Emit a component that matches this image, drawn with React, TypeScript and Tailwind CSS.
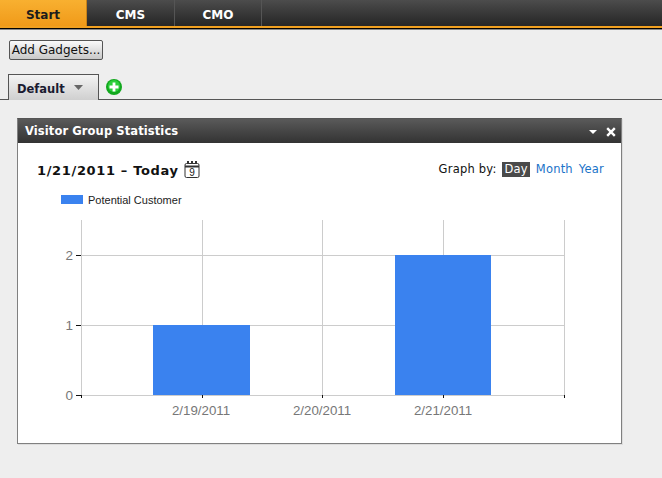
import React from "react";

const sans = "font-['DejaVu_Sans',sans-serif]";

function Tab({ label, active, w }: { label: string; active?: boolean; w: string }) {
  return (
    <div
      className={`${w} h-[26px] pt-[3px] flex items-center justify-center text-[12px] font-bold border-r ${
        active
          ? "bg-gradient-to-b from-[#f8b030] to-[#f09a18] text-[#1c1c1c] border-[#c88218]"
          : "bg-gradient-to-b from-[#4c4c4c] to-[#262626] text-white border-[#555555]"
      }`}
    >
      {label}
    </div>
  );
}

function Chart() {
  const ys = [255, 325];
  const xs = [81.5, 202.5, 322.5, 443.5, 564.5];
  const txt = "#777777";
  return (
    <svg width="662" height="240" viewBox="0 190 662 240" className="block -ml-[18px]" style={{ fontFamily: "'Liberation Sans', sans-serif" }}>
      <rect x="61" y="195" width="22" height="9" fill="#3a82ef" />
      <text x="88" y="204" fontSize="11" fill="#222222">Potential Customer</text>
      {xs.map((x) => (
        <line key={x} x1={x} x2={x} y1="220" y2="395" stroke="#cccccc" />
      ))}
      {ys.map((y) => (
        <line key={y} x1="81" x2="565" y1={y + 0.5} y2={y + 0.5} stroke="#cccccc" />
      ))}
      <rect x="153" y="325" width="97" height="70" fill="#3a82ef" />
      <rect x="395" y="255" width="96" height="140" fill="#3a82ef" />
      <line x1="81" x2="565" y1="395.5" y2="395.5" stroke="#cccccc" />
      {[255, 325, 395].map((y) => (
        <line key={y} x1="76" x2="81" y1={y + 0.5} y2={y + 0.5} stroke="#111111" />
      ))}
      {xs.map((x) => (
        <line key={x} x1={x} x2={x} y1="395" y2="398" stroke="#111111" />
      ))}
      {[["2", 260], ["1", 330], ["0", 400]].map(([l, y]) => (
        <text key={l as string} x="73" y={y as number} fontSize="13.5" fill={txt} textAnchor="end">{l}</text>
      ))}
      {[["2/19/2011", 201], ["2/20/2011", 322], ["2/21/2011", 443]].map(([l, x]) => (
        <text key={l as string} x={x as number} y="415" fontSize="13.3" fill={txt} textAnchor="middle">{l}</text>
      ))}
    </svg>
  );
}

export default function App() {
  return (
    <div className={`w-[662px] h-[478px] overflow-hidden bg-[#eeeeee] ${sans}`}>
      <div className="h-[30px] bg-black border-b border-[#888888]">
        <div className="flex h-[26px] bg-gradient-to-b from-[#4c4c4c] to-[#262626]">
          <Tab label="Start" active w="w-[87px]" />
          <Tab label="CMS" w="w-[88px]" />
          <Tab label="CMO" w="w-[87px]" />
        </div>
        <div className="h-[2px] bg-[#f0a020]" />
      </div>

      <div className="pl-[9px] pt-[10px]">
        <button className="block w-[94px] h-[20px] rounded-[2px] border border-[#555555] bg-gradient-to-b from-[#fafafa] to-[#c8c8c8] text-[12px] leading-[17px] text-[#111111] whitespace-nowrap">
          Add Gadgets...
        </button>
      </div>

      <div className="mt-[14px] h-[26px] border-b border-[#555555] pl-[8px] flex">
        <div className="w-[91px] h-[26px] border border-b-0 border-[#555555] bg-gradient-to-b from-[#f4f4f4] to-[#cfcfcf] flex items-center pl-[8px] pt-[5px] gap-[9px]">
          <span className="text-[11.5px] font-bold text-[#1a1a30]">Default</span>
          <svg width="9" height="5" viewBox="0 0 9 5" className="-mt-[5px]"><path d="M0 0h9L4.5 5z" fill="#666666" /></svg>
        </div>
        <svg width="16" height="16" viewBox="0 0 16 16" className="ml-[7px] mt-[5px]">
          <circle cx="8" cy="8" r="8" fill="#12a81e" />
          <circle cx="8" cy="7" r="6" fill="#2ccf3a" />
          <path d="M6.6 3.5h2.8v3.1h3.1v2.8H9.4v3.1H6.6V9.4H3.5V6.6h3.1z" fill="#ffffff" />
        </svg>
      </div>

      <div className="ml-[17px] mt-[18px] w-[605px] h-[326px] border border-[#808080] border-t-[#555555] bg-white shadow-[1px_1px_0_#dddddd]">
        <div className="h-[24px] pt-[2px] bg-gradient-to-b from-[#5a5a5a] to-[#333333] flex items-center pl-[7px] pr-[5px] text-white">
          <span className="text-[11.5px] font-bold tracking-[0.1px]">Visitor Group Statistics</span>
          <svg width="8" height="4" viewBox="0 0 8 4" className="ml-auto"><path d="M0 0h8L4 4z" fill="#ffffff" /></svg>
          <svg width="10" height="10" viewBox="0 0 10 10" className="ml-[9px]"><path d="M1.2 1.2l7.6 7.6M8.8 1.2L1.2 8.8" stroke="#ffffff" strokeWidth="2.4" /></svg>
        </div>
        <div className="flex items-start pl-[19px] pr-[17px] pt-[18px] h-[47px]">
          <span className="text-[13px] font-bold text-[#111111] tracking-[0.65px] leading-[17px] mt-px">1/21/2011 – Today</span>
          <svg width="16" height="18" viewBox="0 0 16 18" className="ml-[5px] -mt-px">
            <rect x="1" y="3.5" width="14" height="14" rx="1.5" fill="#ffffff" stroke="#333333" />
            <path d="M1 6.5h14" stroke="#333333" strokeWidth="2" />
            <path d="M4 1v3M8 1v3M12 1v3" stroke="#333333" strokeWidth="2" />
            <text x="8" y="15.5" fontSize="10" fill="#222222" textAnchor="middle" fontFamily="'Liberation Sans', sans-serif">9</text>
          </svg>
          <div className="ml-auto flex items-center text-[11.5px] leading-[15px] tracking-[0.2px] mt-px">
            <span className="text-[#111111]">Graph by:</span>
            <span className="ml-[6px] px-[2px] bg-[#4a4a4a] text-white">Day</span>
            <span className="ml-[6px] text-[#1a73c8]">Month</span>
            <span className="ml-[6px] text-[#1a73c8]">Year</span>
          </div>
        </div>
        <Chart />
      </div>
    </div>
  );
}
